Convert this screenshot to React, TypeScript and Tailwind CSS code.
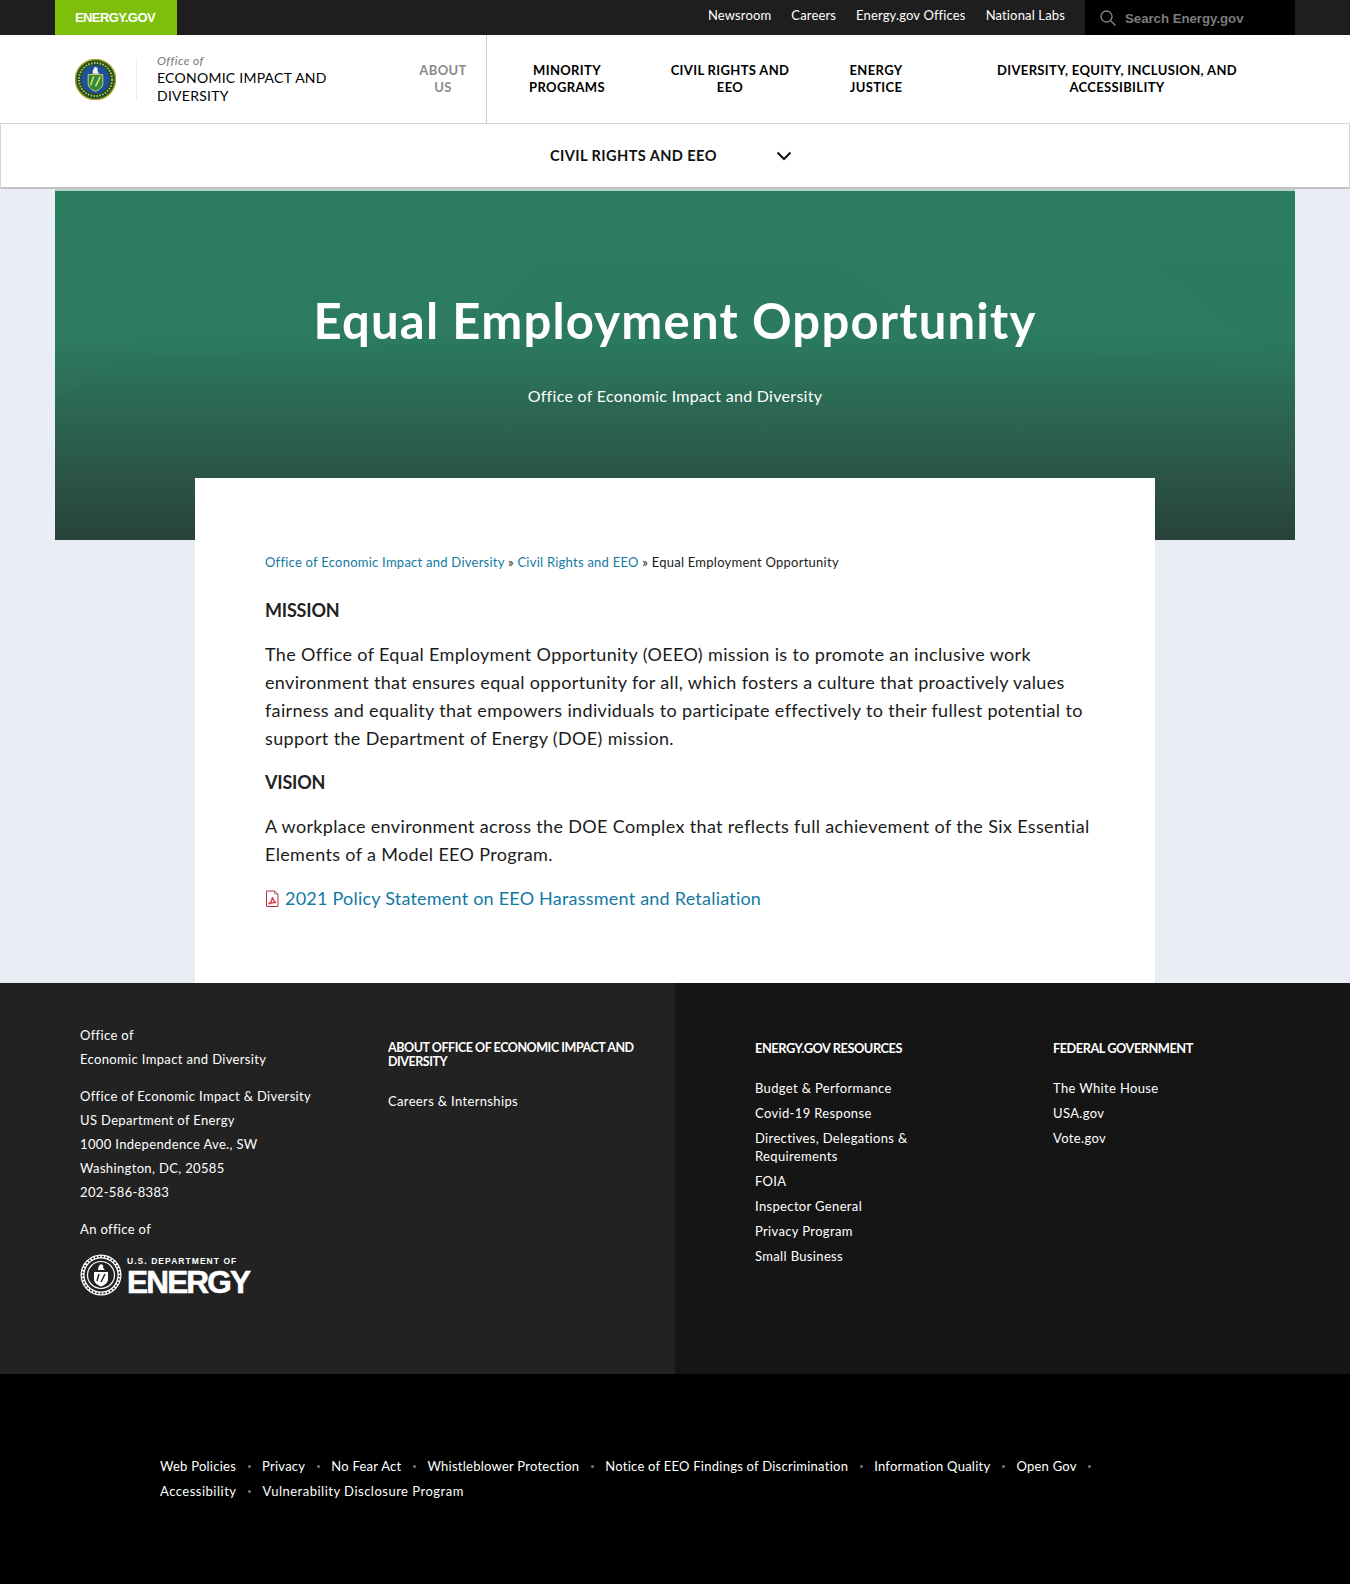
import React from "react";

const font = { fontFamily: '"Lato", "Open Sans", sans-serif' };
const arial = { fontFamily: '"Liberation Sans", sans-serif' };

function Seal() {
  return (
    <svg width="41" height="41" viewBox="0 0 42 42" aria-hidden="true">
      <circle cx="21" cy="21" r="20.5" fill="#1f4d2a" />
      <circle cx="21" cy="21" r="20.5" fill="none" stroke="#a7a31f" strokeWidth="1.5" />
      <circle cx="21" cy="21" r="17" fill="none" stroke="#c9c84a" strokeWidth="2" strokeDasharray="1.5 1.5" />
      <circle cx="21" cy="21" r="14.5" fill="#1e4fa0" />
      <path d="M13.5 16h15v9c0 4-3.5 6.5-7.5 8-4-1.500-7.500-4-7.500-8z" fill="#2f8a3c" stroke="#d8d45a" strokeWidth="1" />
      <path d="M19 18l-3 9M26 18l-5 10" stroke="#e8e36a" strokeWidth="1.500" />
      <path d="M18 15c0-3 1-6 3-7 2 1 3 2 2 3 0 2 1 3 2 4z" fill="#f3f3ea" />
    </svg>
  );
}

function EnergyLogo() {
  return (
    <div className="flex items-start gap-[5px] text-white">
      <svg width="42" height="42" viewBox="0 0 42 42" aria-hidden="true" className="shrink-0">
        <circle cx="21" cy="21" r="20.500" fill="#fff" />
        <circle cx="21" cy="21" r="16.500" fill="#222" />
        <circle cx="21" cy="21" r="18.500" fill="none" stroke="#222" strokeWidth="1.500" strokeDasharray="2 1.500" />
        <circle cx="21" cy="21" r="13.500" fill="none" stroke="#fff" strokeWidth="1.200" />
        <path d="M14 18h14v7c0 4-3.500 6-7 7.500-3.500-1.500-7-3.500-7-7.500z" fill="#fff" />
        <path d="M19 20l-2 7M25 20l-4 8" stroke="#222" strokeWidth="1.500" />
        <path d="M18 16c0-3 1-5 3-6 2 1 3 2 2 3 0 1 1 2 2 3z" fill="#fff" />
      </svg>
      <div className="flex flex-col">
        <span className="text-[8.500px] leading-[8px] font-bold tracking-[1.05px] mt-[3px] whitespace-nowrap" style={arial}>
          U.S. DEPARTMENT OF
        </span>
        <span className="text-[31.500px] leading-[28px] mt-[3px] font-bold whitespace-nowrap tracking-[-1.8px] [-webkit-text-stroke:0.6px_white]" style={arial}>
          ENERGY
        </span>
      </div>
    </div>
  );
}

function PdfIcon() {
  return (
    <svg width="15" height="17" viewBox="0 0 15 17" aria-hidden="true" className="shrink-0">
      <path d="M1.500 1h8l3.500 3v12.500h-11.500z" fill="#fff" stroke="#b5333f" strokeWidth="1" />
      <path d="M9.500 1v3h3.500" fill="none" stroke="#888" strokeWidth="1" />
      <path d="M3.500 14c2-1 3.500-3.500 4-7 .5 3 2 5 3.500 5.500-2.500-.2-5 .3-7.500 1.500z" fill="none" stroke="#d9343f" strokeWidth="1.400" />
    </svg>
  );
}

const top = ["Newsroom", "Careers", "Energy.gov Offices", "National Labs"];
const res = ["Budget & Performance", "Covid-19 Response", "Directives, Delegations & Requirements", "FOIA", "Inspector General", "Privacy Program", "Small Business"];
const bottom1 = ["Web Policies", "Privacy", "No Fear Act", "Whistleblower Protection", "Notice of EEO Findings of Discrimination", "Information Quality", "Open Gov"];
const bottom2 = ["Accessibility", "Vulnerability Disclosure Program"];

function BottomRow({ items, trailing, wide }: { items: string[]; trailing?: boolean; wide?: boolean }) {
  return (
    <div className={wide ? "flex items-center h-[25px] whitespace-nowrap tracking-[0.5px]" : "flex items-center h-[25px] whitespace-nowrap"}>
      {items.map((t, i) => (
        <React.Fragment key={t}>
          <span>{t}</span>
          {(i < items.length - 1 || trailing) && <span className="w-[3px] h-[3px] rounded-full bg-[#777] mx-[11.500px]" />}
        </React.Fragment>
      ))}
    </div>
  );
}

export default function App() {
  return (
    <div className="w-[1350px] h-[1584px] overflow-hidden bg-[#e9eef4] text-[#1b1b1b]" style={font}>
      <div className="h-[35px] bg-[#1e1e1e] px-[55px] flex justify-between">
        <div className="w-[122px] bg-[#7dbf0b] flex items-center pl-[20px] pt-[1px] text-white text-[13px] font-bold tracking-[-0.6px]" style={arial}>
          ENERGY.GOV
        </div>
        <div className="flex">
          <div className="flex gap-[20px] text-white text-[13px] pt-[6px] mr-[20px] tracking-[0.15px]">
            {top.map((t) => <span key={t}>{t}</span>)}
          </div>
          <div className="w-[210px] bg-black flex items-center pl-[15px] gap-[9px]">
            <svg width="16" height="16" viewBox="0 0 16 16" fill="none" stroke="#8a8a8a" strokeWidth="1.300" aria-hidden="true">
              <circle cx="6.500" cy="6.500" r="5.500" />
              <path d="M10.500 10.500L15.500 15.500" />
            </svg>
            <span className="text-[13.200px] font-bold text-[#7b7b7b] mt-[3px]" style={arial}>Search Energy.gov</span>
          </div>
        </div>
      </div>

      <div className="h-[88px] bg-white px-[55px] flex">
        <div className="w-[358px] flex items-center pl-[20px]">
          <Seal />
          <div className="w-px h-[42px] bg-[#eeeeee] mx-[20px]" />
          <div className="w-[200px]">
            <div className="text-[12px] italic leading-[16px] text-[#777] tracking-[0.4px]">Office of</div>
            <div className="text-[14px] leading-[18px] text-black tracking-[0.25px]">ECONOMIC IMPACT AND DIVERSITY</div>
          </div>
        </div>
        <div className="w-[60px] flex items-center justify-center text-center text-[13px] leading-[17px] font-bold tracking-[0.35px] text-[#8a8a8a]">ABOUT<br />US</div>
        <div className="w-[13px]" />
        <div className="flex-1 border-l border-[#cfcfcf] flex items-center text-center text-[13px] leading-[17px] font-bold text-black tracking-[0.35px]">
          <div className="w-[160px]">MINORITY<br />PROGRAMS</div>
          <div className="w-[166px]">CIVIL RIGHTS AND<br />EEO</div>
          <div className="w-[126px]">ENERGY<br />JUSTICE</div>
          <div className="flex-1">DIVERSITY, EQUITY, INCLUSION, AND<br />ACCESSIBILITY</div>
        </div>
      </div>

      <div className="h-[66px] bg-white border border-[#d5d5d5] border-b-[2px] border-b-[#c2c2c2] flex items-center pl-[549px] pt-[1px]">
        <span className="w-[226px] text-[14.600px] font-bold text-[#111] tracking-[0.4px]">CIVIL RIGHTS AND EEO</span>
        <svg width="16" height="10" viewBox="0 0 16 10" fill="none" stroke="#111" strokeWidth="2" aria-hidden="true">
          <path d="M1.500 1.500L8 8l6.500-6.500" />
        </svg>
      </div>

      <div className="h-[2px] mx-[55px] bg-[#b5d4c7]" />
      <div className="relative mx-[55px] h-[349px] pt-[97px] text-center text-white bg-[linear-gradient(180deg,#2b7c60_0%,#2b7a5f_42%,#2c5b4a_75%,#27423a_100%)]">
        <svg className="absolute inset-0 w-full h-full" viewBox="0 0 1240 349" preserveAspectRatio="none" aria-hidden="true">
          <polygon points="0,0 240,0 60,170 0,210" fill="#fff" fillOpacity="0.012" />
          <polygon points="240,0 530,0 420,150 60,170" fill="#fff" fillOpacity="0.008" />
          <polygon points="700,0 1000,0 1240,180 880,150" fill="#fff" fillOpacity="0.008" />
        </svg>
        <h1 className="relative text-[49px] leading-[64px] font-bold tracking-[1.2px]">Equal Employment Opportunity</h1>
        <div className="relative mt-[32px] text-[16px] leading-[24px] tracking-[0.3px]">Office of Economic Impact and Diversity</div>
      </div>

      <div className="w-[960px] h-[505px] -mt-[62px] ml-[195px] bg-white relative pl-[70px] pr-[60px] pt-[72px]">
        <div className="text-[13px] leading-[24px] tracking-[0.25px] whitespace-nowrap">
          <span className="text-[#1279a3]">Office of Economic Impact and Diversity</span> » <span className="text-[#1279a3]">Civil Rights and EEO</span> » Equal Employment Opportunity
        </div>
        <h2 className="mt-[22px] text-[18px] leading-[28px] font-bold text-[#222] tracking-[-0.2px]">MISSION</h2>
        <p className="mt-[16px] text-[18px] leading-[28px] tracking-[0.35px]">
          The Office of Equal Employment Opportunity (OEEO) mission is to promote an inclusive work environment that ensures equal opportunity for all, which fosters a culture that proactively values fairness and equality that empowers individuals to participate effectively to their fullest potential to support the Department of Energy (DOE) mission.
        </p>
        <h2 className="mt-[16px] text-[18px] leading-[28px] font-bold text-[#222] tracking-[-0.2px]">VISION</h2>
        <p className="mt-[16px] text-[18px] leading-[28px] tracking-[0.35px]">
          A workplace environment across the DOE Complex that reflects full achievement of the Six Essential Elements of a Model EEO Program.
        </p>
        <div className="mt-[16px] flex items-center gap-[5px] text-[18px] leading-[28px] tracking-[0.22px] text-[#1279a3]">
          <PdfIcon />
          <span>2021 Policy Statement on EEO Harassment and Retaliation</span>
        </div>
      </div>

      <div className="h-[391px] flex text-white text-[13px] tracking-[0.35px]">
        <div className="w-[675px] bg-[#222222] pl-[80px] pt-[40px] flex">
          <div className="w-[308px] leading-[24px]">
            <div>Office of</div>
            <div>Economic Impact and Diversity</div>
            <div className="mt-[13px]">Office of Economic Impact &amp; Diversity</div>
            <div>US Department of Energy</div>
            <div>1000 Independence Ave., SW</div>
            <div>Washington, DC, 20585</div>
            <div>202-586-8383</div>
            <div className="mt-[13px]">An office of</div>
            <div className="mt-[13px]"><EnergyLogo /></div>
          </div>
          <div className="w-[252px] pt-[18px]">
            <div className="font-bold text-[12.500px] leading-[14px] tracking-[-0.45px]">ABOUT OFFICE OF ECONOMIC IMPACT AND DIVERSITY</div>
            <div className="mt-[20px] leading-[25px]">Careers &amp; Internships</div>
          </div>
        </div>
        <div className="flex-1 bg-[#151515] pl-[80px] pt-[58px] flex">
          <div className="w-[298px]">
            <div className="font-bold text-[12.800px] leading-[14px] tracking-[-0.45px]">ENERGY.GOV RESOURCES</div>
            <div className="mt-[21px] w-[190px] leading-[18px] flex flex-col gap-[7px] pt-[3px]">
              {res.map((t) => <div key={t}>{t}</div>)}
            </div>
          </div>
          <div>
            <div className="font-bold text-[12.800px] leading-[14px] tracking-[-0.5px]">FEDERAL GOVERNMENT</div>
            <div className="mt-[21px] leading-[18px] flex flex-col gap-[7px] pt-[3px]">
              {["The White House", "USA.gov", "Vote.gov"].map((t) => <div key={t}>{t}</div>)}
            </div>
          </div>
        </div>
      </div>

      <div className="h-[210px] bg-black text-white text-[13px] tracking-[0.25px] pl-[160px] pt-[80px]">
        <BottomRow items={bottom1} trailing />
        <BottomRow items={bottom2} wide />
      </div>
    </div>
  );
}
